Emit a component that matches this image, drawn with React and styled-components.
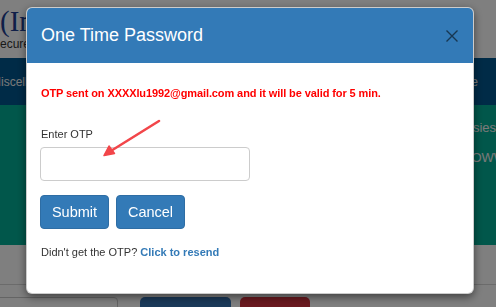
import React from 'react';
import styled, { createGlobalStyle } from 'styled-components';

const GlobalStyle = createGlobalStyle`
  html, body {
    margin: 0;
    padding: 0;
    background: #ffffff;
    font-family: "Liberation Sans", Arial, sans-serif;
  }
  * { box-sizing: border-box; }
`;

const Page = styled.div`
  width: 496px;
  height: 307px;
  overflow: hidden;
  display: flex;
  flex-direction: column;
`;

const TopBar = styled.div`
  flex: 0 0 58px;
  background: #ffffff;
  display: flex;
  flex-direction: column;
  padding-top: 7px;
  overflow: hidden;
`;

const Logo = styled.div`
  font-family: "Liberation Serif", "Times New Roman", serif;
  font-size: 29px;
  color: #213f92;
  line-height: 28px;
  white-space: nowrap;
`;

const Tagline = styled.div`
  font-size: 12px;
  color: #333;
  margin-top: 2px;
  margin-left: -8px;
  white-space: nowrap;
`;

const NavBar = styled.div`
  flex: 0 0 47px;
  background: #00568e;
  display: flex;
  align-items: center;
  justify-content: space-between;
  color: #f2f2f2;
  font-size: 12px;
  white-space: nowrap;
`;

const NavItem = styled.span`
  margin-left: ${p => p.$offset || 0}px;
  margin-right: ${p => p.$right || 0}px;
`;

const Hero = styled.div`
  flex: 0 0 140px;
  background: #03ae96;
  display: flex;
  justify-content: flex-end;
`;

const HeroText = styled.div`
  width: 40px;
  padding-top: 8px;
  color: #f4f4f4;
  font-size: 13px;
  line-height: 30px;
  white-space: nowrap;
`;

const HeroLine = styled.div`
  margin-left: ${p => p.$indent || 0}px;
`;

const Lower = styled.div`
  flex: 1;
  background: #ffffff;
  display: flex;
  flex-direction: column;
`;

const Divider = styled.div`
  flex: 0 0 40px;
  border-bottom: 1px solid #d6d6d6;
`;

const FormRow = styled.div`
  display: flex;
  align-items: flex-start;
  padding-top: 12px;
  gap: 9px;
`;

const FakeInput = styled.div`
  width: 122px;
  height: 30px;
  border: 1px solid #c8c8c8;
  border-radius: 4px;
  margin-left: -4px;
  margin-right: 13px;
`;

const FakeButton = styled.div`
  width: ${p => p.$w}px;
  height: 30px;
  border-radius: 5px;
  background: ${p => p.$bg};
`;

const Backdrop = styled.div`
  position: fixed;
  inset: 0;
  background: rgba(0, 0, 0, 0.5);
`;

const Modal = styled.div`
  position: fixed;
  left: 26px;
  top: 7px;
  width: 448px;
  background: #ffffff;
  border: 1px solid rgba(0, 0, 0, 0.2);
  border-radius: 6px;
  box-shadow: 0 3px 9px rgba(0, 0, 0, 0.5);
  overflow: hidden;
`;

const Header = styled.div`
  background: #337ab7;
  padding: 15px 14px;
  display: flex;
  align-items: center;
  justify-content: space-between;
`;

const Title = styled.h4`
  margin: 0;
  font-size: 18px;
  font-weight: normal;
  line-height: 25px;
  color: #ffffff;
`;

const CloseButton = styled.button`
  border: 0;
  background: transparent;
  padding: 0;
  width: 12px;
  height: 12px;
  margin-right: 1px;
  cursor: pointer;
  display: flex;
`;

const Body = styled.div`
  padding: 22px 13px 33px;
  position: relative;
`;

const Notice = styled.p`
  margin: 0;
  font-size: 11px;
  font-weight: bold;
  line-height: 16px;
  letter-spacing: -0.1px;
  color: #ff0000;
  padding-left: 1px;
`;

const Label = styled.label`
  display: block;
  margin-top: 25px;
  font-size: 11px;
  line-height: 16px;
  color: #333333;
  padding-left: 1px;
`;

const OtpInput = styled.input`
  display: block;
  margin-top: 5px;
  width: 210px;
  height: 34px;
  border: 1px solid #cccccc;
  border-radius: 4px;
  padding: 6px 12px;
  font-size: 14px;
  outline: none;
`;

const Actions = styled.div`
  display: flex;
  gap: 7px;
  margin-top: 14px;
`;

const Button = styled.button`
  width: 69px;
  height: 34px;
  border: 1px solid #2e6da4;
  border-radius: 4px;
  background: #337ab7;
  color: #ffffff;
  font-family: "Liberation Sans", Arial, sans-serif;
  font-size: 14.5px;
  padding: 0;
  cursor: pointer;
`;

const Resend = styled.p`
  margin: 15px 0 0;
  font-size: 11px;
  line-height: 16px;
  color: #333333;
  padding-left: 1px;
`;

const Link = styled.a`
  color: #337ab7;
  font-weight: bold;
  text-decoration: none;
`;

const Arrow = styled.svg`
  position: absolute;
  left: 75px;
  top: 56px;
  overflow: visible;
`;

export default function App() {
  return (
    <>
      <GlobalStyle />
      <Page>
        <TopBar>
          <Logo>(India</Logo>
          <Tagline>Secure</Tagline>
        </TopBar>
        <NavBar>
          <NavItem $offset={-9}>Miscellaneous</NavItem>
          <NavItem $right={18}>Time</NavItem>
        </NavBar>
        <Hero>
          <HeroText>
            <HeroLine $indent={1}>Easiest</HeroLine>
            <HeroLine $indent={6}>NOWW</HeroLine>
          </HeroText>
        </Hero>
        <Lower>
          <Divider />
          <FormRow>
            <FakeInput />
            <FakeButton $w={91} $bg="#3674b4" />
            <FakeButton $w={70} $bg="#d63440" />
          </FormRow>
        </Lower>
      </Page>
      <Backdrop />
      <Modal>
        <Header>
          <Title>One Time Password</Title>
          <CloseButton aria-label="Close">
            <svg width="12" height="12" viewBox="0 0 12 12">
              <path d="M0.5 0.5 L11.5 11.5 M11.5 0.5 L0.5 11.5" stroke="rgba(0,0,0,0.55)" strokeWidth="1.4" fill="none" />
            </svg>
          </CloseButton>
        </Header>
        <Body>
          <Notice>OTP sent on XXXXlu1992@gmail.com and it will be valid for 5 min.</Notice>
          <Label>Enter OTP</Label>
          <OtpInput type="text" />
          <Actions>
            <Button type="button">Submit</Button>
            <Button type="button">Cancel</Button>
          </Actions>
          <Resend>
            Didn't get the OTP? <Link href="#">Click to resend</Link>
          </Resend>
          <Arrow width="60" height="40">
            <path d="M57 2 L4 35" stroke="#f2464a" strokeWidth="2.6" strokeLinecap="round" fill="none" />
            <path d="M2 36.5 L7 27 L12.5 34.5 Z" fill="#f2464a" stroke="#f2464a" strokeWidth="1.5" strokeLinejoin="round" />
          </Arrow>
        </Body>
      </Modal>
    </>
  );
}
